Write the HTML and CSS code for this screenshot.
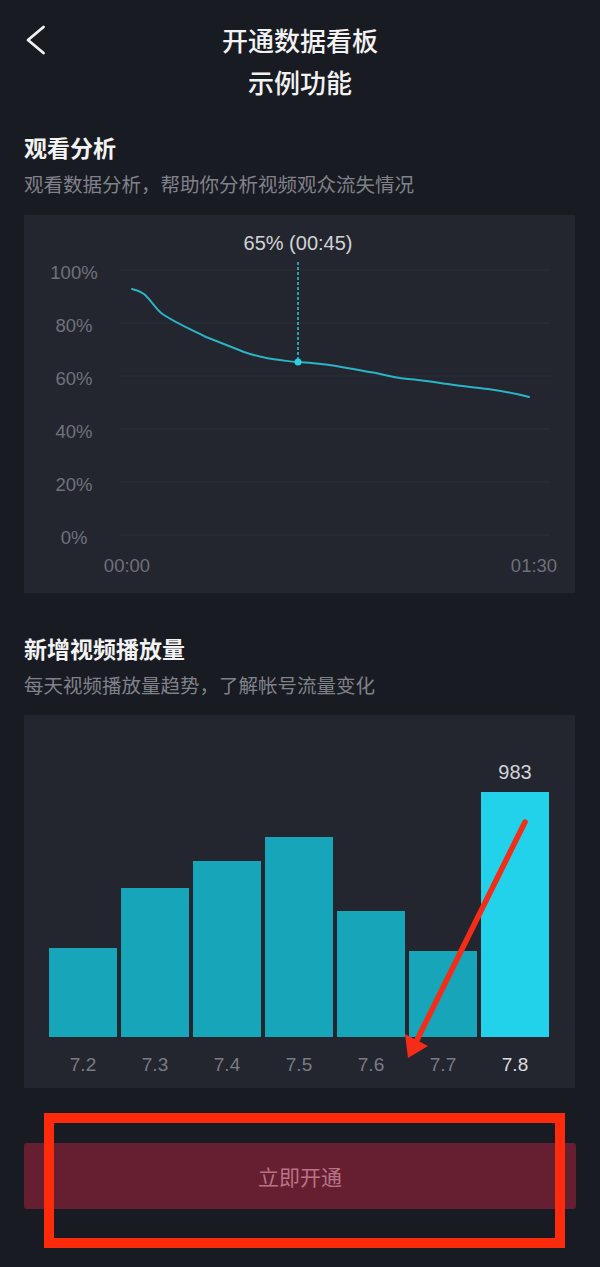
FILE: index.html
```html
<!DOCTYPE html>
<html lang="zh-CN">
<head>
<meta charset="utf-8">
<title>开通数据看板</title>
<link rel="stylesheet" href="styles.css">
</head>
<body>
<div class="page">
  <header class="topbar">
    <div class="back">
      <svg width="22" height="30" viewBox="0 0 22 30"><path d="M18.5 2 L3 15 L18.5 28" fill="none" stroke="#f2f2f2" stroke-width="2.8" stroke-linecap="round" stroke-linejoin="round"/></svg>
    </div>
    <h1 class="title">开通数据看板</h1>
    <div class="spacer"></div>
    <div class="subtitle">示例功能</div>
  </header>

  <section class="section first">
    <h2 class="heading">观看分析</h2>
    <p class="desc">观看数据分析，帮助你分析视频观众流失情况</p>
    <div class="card line-card">
      <svg class="linechart" width="551" height="378" viewBox="0 0 551 378">
        <g class="grid">
          <line x1="96" y1="55" x2="526" y2="55"/>
          <line x1="96" y1="108" x2="526" y2="108"/>
          <line x1="96" y1="161" x2="526" y2="161"/>
          <line x1="96" y1="214" x2="526" y2="214"/>
          <line x1="96" y1="267" x2="526" y2="267"/>
          <line x1="96" y1="320" x2="526" y2="320"/>
        </g>
        <g class="ylab">
          <text x="50" y="57">100%</text>
          <text x="50" y="110">80%</text>
          <text x="50" y="163">60%</text>
          <text x="50" y="216">40%</text>
          <text x="50" y="269">20%</text>
          <text x="50" y="322">0%</text>
        </g>
        <text class="xlab" x="103" y="350">00:00</text>
        <text class="xlab" x="510" y="350">01:30</text>
        <text class="tip" x="274" y="28">65% (00:45)</text>
        <line class="dash" x1="274" y1="47" x2="274" y2="147"/>
        <path class="curve" d="M108 74 C113 75 116 76 120 79 C128 86 133 96 140 100 C152 108 166 114 182 122 C195 127 205 131 220 137 C232 141 243 144 256 145 C263 146 268 147 274 147 C290 148 300 149 312 151 C330 154 340 156 352 158 C364 161 372 163 384 164 C398 165 410 167 424 169 C436 171 448 172 464 174 C478 176 490 178 505 182"/>
        <circle class="dot" cx="274" cy="147" r="3.5"/>
      </svg>
    </div>
  </section>

  <section class="section second">
    <h2 class="heading">新增视频播放量</h2>
    <p class="desc">每天视频播放量趋势，了解帐号流量变化</p>
    <div class="card bar-card">
      <div class="plot">
        <div class="col"><div class="bar" style="height:89px"></div></div>
        <div class="col"><div class="bar" style="height:149px"></div></div>
        <div class="col"><div class="bar" style="height:176px"></div></div>
        <div class="col"><div class="bar" style="height:200px"></div></div>
        <div class="col"><div class="bar" style="height:126px"></div></div>
        <div class="col"><div class="bar" style="height:86px"></div></div>
        <div class="col"><div class="val">983</div><div class="bar hi" style="height:245px"></div></div>
      </div>
      <div class="xlabels">
        <span>7.2</span><span>7.3</span><span>7.4</span><span>7.5</span><span>7.6</span><span>7.7</span><span class="cur">7.8</span>
      </div>
    </div>
  </section>

  <div class="action">
    <button class="open-btn" type="button">立即开通</button>
  </div>

  <svg class="arrow" width="600" height="1267" viewBox="0 0 600 1267">
    <line x1="525" y1="822" x2="416" y2="1042" stroke="#f42c18" stroke-width="5.5" stroke-linecap="round"/>
    <polygon points="408,1058 405,1034 428,1046" fill="#f42c18"/>
  </svg>
  <div class="redbox"></div>
</div>
</body>
</html>
```

FILE: styles.css
```css
html, body {
  margin: 0;
  padding: 0;
}
body {
  background: #191b23;
  width: 600px;
  height: 1267px;
  overflow: hidden;
  font-family: "Noto Sans CJK SC", "Noto Sans", sans-serif;
  color: #f0f0f0;
}
.page {
  position: relative;
  width: 600px;
  height: 1267px;
}
.topbar {
  display: grid;
  grid-template-columns: 1fr auto 1fr;
  padding-top: 22px;
}
.back {
  display: flex;
  align-items: center;
  padding-left: 25px;
  height: 36px;
}
.back svg { display: block; }
.title {
  margin: 0;
  font-size: 26px;
  line-height: 36px;
  font-weight: 500;
  color: #f2f2f2;
}
.subtitle {
  grid-column: 2;
  margin-top: 6px;
  font-size: 26px;
  line-height: 36px;
  font-weight: 500;
  text-align: center;
  color: #f2f2f2;
}
.section {
  padding: 0 25px 0 24px;
}
.section.first { margin-top: 31px; }
.section.second { margin-top: 39px; }
.heading {
  margin: 0;
  font-size: 23px;
  line-height: 32px;
  font-weight: 700;
  color: #f2f2f2;
}
.desc {
  margin: 7px 0 0;
  font-size: 19.5px;
  line-height: 28px;
  color: #80828a;
  white-space: nowrap;
}
.card {
  background: #23262f;
  width: 551px;
}
.line-card {
  margin-top: 17px;
  height: 378px;
}
.linechart { display: block; }
.grid line {
  stroke: #2b2e37;
  stroke-width: 1;
}
.ylab text {
  font-family: "Liberation Sans", Arial, sans-serif;
  font-size: 18.5px;
  fill: #70727a;
  text-anchor: middle;
  dominant-baseline: central;
}
.xlab {
  font-family: "Liberation Sans", Arial, sans-serif;
  font-size: 18.5px;
  fill: #6e7078;
  text-anchor: middle;
  dominant-baseline: central;
}
.tip {
  font-family: "Liberation Sans", Arial, sans-serif;
  font-size: 20px;
  fill: #d2d3d6;
  text-anchor: middle;
  dominant-baseline: central;
}
.dash {
  stroke: #2bbdd2;
  stroke-width: 1.6;
  stroke-dasharray: 3 2;
}
.curve {
  fill: none;
  stroke: #2ab4c6;
  stroke-width: 2;
  stroke-linecap: round;
  stroke-linejoin: round;
}
.dot { fill: #2fd0e6; }

.bar-card {
  margin-top: 16px;
  height: 373px;
  padding-bottom: 9px;
  box-sizing: border-box;
}
.plot {
  display: flex;
  align-items: flex-end;
  gap: 4px;
  height: 322px;
  padding-left: 25px;
}
.col {
  width: 68px;
  display: flex;
  flex-direction: column;
  align-items: center;
}
.val {
  font-family: "Liberation Sans", Arial, sans-serif;
  font-size: 20px;
  line-height: 24px;
  color: #d2d3d6;
  margin-bottom: 8px;
}
.bar {
  width: 68px;
  background: #17a6b9;
}
.bar.hi { background: #22d2ea; }
.xlabels {
  display: flex;
  gap: 4px;
  padding-left: 25px;
  margin-top: 14px;
}
.xlabels span {
  width: 68px;
  text-align: center;
  font-family: "Liberation Sans", Arial, sans-serif;
  font-size: 19px;
  line-height: 28px;
  color: #7a7c84;
}
.xlabels span.cur { color: #dcdde0; }

.action {
  margin-top: 55px;
  padding-left: 24px;
}
.open-btn {
  display: block;
  width: 552px;
  height: 66px;
  border: 0;
  border-radius: 3px;
  background: #661f30;
  color: #b87486;
  font-family: "Noto Sans CJK SC", sans-serif;
  font-size: 21px;
  padding: 0;
}
.arrow {
  position: absolute;
  left: 0;
  top: 0;
  pointer-events: none;
}
.redbox {
  position: absolute;
  left: 44px;
  top: 1113px;
  width: 521px;
  height: 135px;
  box-sizing: border-box;
  border: 10px solid #fe2a0c;
  pointer-events: none;
}
```
